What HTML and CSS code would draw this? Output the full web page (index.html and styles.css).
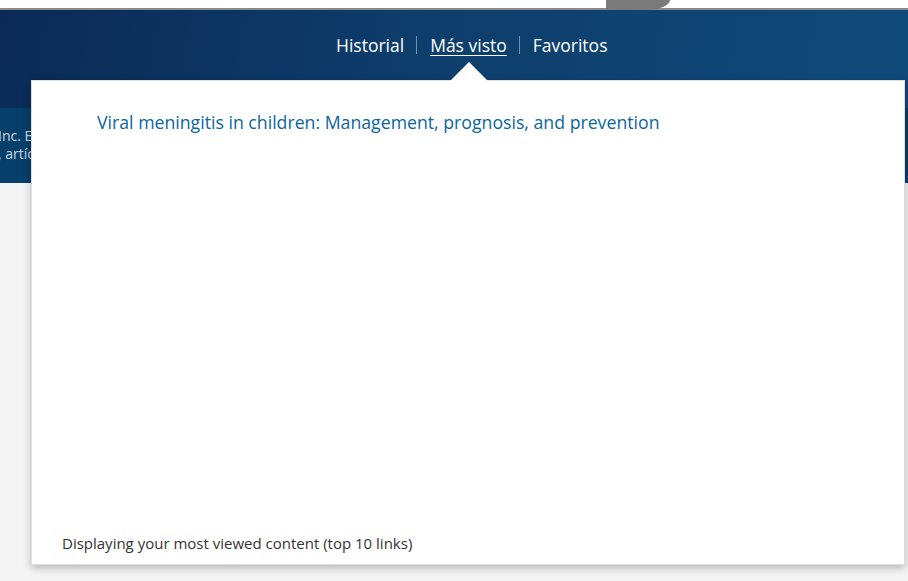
FILE: index.html
```html
<!DOCTYPE html>
<html lang="es">
<head>
    <meta charset="UTF-8">
    <meta name="viewport" content="width=device-width, initial-scale=1.0">
    <title>Más visto</title>
    <link rel="stylesheet" href="styles.css">
</head>
<body>

    <div class="topbar">
        <div class="topbar-tab"></div>
    </div>

    <div class="masthead">
        <ul class="nav">
            <li><a href="#">Historial</a></li>
            <li class="sep"></li>
            <li><a href="#" class="active">Más visto</a></li>
            <li class="sep"></li>
            <li><a href="#">Favoritos</a></li>
        </ul>
    </div>

    <div class="band">
        <p>Inc. Este contenido,<br>, artículos y materiales</p>
    </div>

    <div class="page"></div>

    <div class="dropdown">
        <span class="pointer"></span>
        <ul class="links">
            <li><a href="#">Viral meningitis in children: Management, prognosis, and prevention</a></li>
        </ul>
        <p class="note">Displaying your most viewed content (top 10 links)</p>
    </div>

</body>
</html>
```

FILE: styles.css
```css
body {
    margin: 0;
    font-family: "Open Sans", "Noto Sans", sans-serif;
    background-color: #f4f4f4;
    position: relative;
    height: 581px;
    overflow: hidden;
}
.topbar {
    height: 8px;
    background-color: #fff;
    border-bottom: 2px solid #8a8a8a;
    position: relative;
}
.topbar-tab {
    position: absolute;
    left: 606px;
    top: 0;
    width: 64px;
    height: 10px;
    background-color: #7a7a7a;
    border-bottom-right-radius: 24px 10px;
}
.masthead {
    height: 98px;
    background: linear-gradient(100deg, #0b2a57 0%, #0d3d6b 45%, #104a7a 100%);
}
.nav {
    list-style: none;
    margin: 0;
    padding: 23px 0 0 336px;
    display: flex;
    align-items: center;
}
.nav a {
    color: #fff;
    font-size: 17.5px;
    text-decoration: none;
}
.nav a.active {
    text-decoration: underline;
    text-underline-offset: 3px;
}
.nav .sep {
    width: 1px;
    height: 18px;
    background-color: #6f8fae;
    margin: 0 13px 0 12px;
}
.band {
    height: 75px;
    background-color: #063f69;
    overflow: hidden;
}
.band p {
    margin: 0;
    padding-top: 19px;
    margin-left: -2px;
    color: #c8d8e8;
    font-size: 14px;
    line-height: 18px;
}
.dropdown {
    position: absolute;
    left: 31px;
    top: 80px;
    width: 874px;
    height: 485px;
    background-color: #fff;
    border: 1px solid #dedede;
    box-sizing: border-box;
    box-shadow: 0 3px 8px rgba(0, 0, 0, 0.25);
    display: flex;
    flex-direction: column;
    justify-content: space-between;
}
.pointer {
    position: absolute;
    left: 418px;
    top: -19px;
    width: 0;
    height: 0;
    border-left: 19px solid transparent;
    border-right: 19px solid transparent;
    border-bottom: 19px solid #fff;
}
.links {
    list-style: none;
    margin: 0;
    padding: 29px 0 0 65px;
}
.links a {
    color: #0a66a0;
    font-size: 17.7px;
    text-decoration: none;
}
.note {
    margin: 0 0 11px 30px;
    color: #333;
    font-size: 15px;
}
```
